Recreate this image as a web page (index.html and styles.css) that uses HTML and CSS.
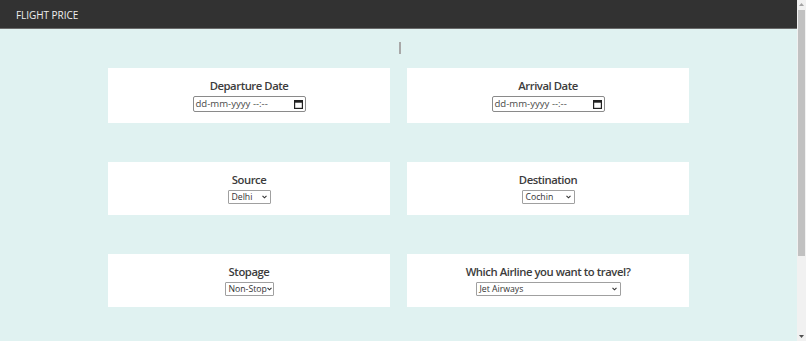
FILE: index.html
```html
<!DOCTYPE html>
<html lang="en">
<head>
<meta charset="utf-8">
<title>Flight Price</title>
<link rel="stylesheet" href="styles.css">
</head>
<body>
<div class="window">
  <div class="page">
    <header class="topbar">FLIGHT PRICE</header>
    <main class="main">
      <div class="caret"></div>
      <div class="grid">
        <section class="card">
          <h5 class="title">Departure Date</h5>
          <div class="date-input"><span class="date-text">dd-mm-yyyy --:--</span>
            <svg class="cal" width="9" height="9" viewBox="0 0 9 9"><rect x="0.6" y="0.6" width="7.8" height="7.8" fill="none" stroke="#222" stroke-width="1.2"/><rect x="0.5" y="0.5" width="8" height="2.2" fill="#222"/></svg>
          </div>
        </section>
        <section class="card">
          <h5 class="title">Arrival Date</h5>
          <div class="date-input"><span class="date-text">dd-mm-yyyy --:--</span>
            <svg class="cal" width="9" height="9" viewBox="0 0 9 9"><rect x="0.6" y="0.6" width="7.8" height="7.8" fill="none" stroke="#222" stroke-width="1.2"/><rect x="0.5" y="0.5" width="8" height="2.2" fill="#222"/></svg>
          </div>
        </section>
        <section class="card card-sm">
          <h5 class="title">Source</h5>
          <div class="select sel-source"><span>Delhi</span>
            <svg class="chev" width="5" height="4" viewBox="0 0 5 4"><path d="M0.5 0.8 L2.5 2.8 L4.5 0.8" fill="none" stroke="#333" stroke-width="1.1"/></svg>
          </div>
        </section>
        <section class="card card-sm">
          <h5 class="title">Destination</h5>
          <div class="select sel-dest"><span>Cochin</span>
            <svg class="chev" width="5" height="4" viewBox="0 0 5 4"><path d="M0.5 0.8 L2.5 2.8 L4.5 0.8" fill="none" stroke="#333" stroke-width="1.1"/></svg>
          </div>
        </section>
        <section class="card card-sm">
          <h5 class="title">Stopage</h5>
          <div class="select sel-stop"><span>Non-Stop</span>
            <svg class="chev" width="5" height="4" viewBox="0 0 5 4"><path d="M0.5 0.8 L2.5 2.8 L4.5 0.8" fill="none" stroke="#333" stroke-width="1.1"/></svg>
          </div>
        </section>
        <section class="card card-sm">
          <h5 class="title">Which Airline you want to travel?</h5>
          <div class="select sel-airline"><span>Jet Airways</span>
            <svg class="chev" width="5" height="4" viewBox="0 0 5 4"><path d="M0.5 0.8 L2.5 2.8 L4.5 0.8" fill="none" stroke="#333" stroke-width="1.1"/></svg>
          </div>
        </section>
      </div>
    </main>
  </div>
  <div class="scrollbar">
    <div class="sb-arrow"><svg width="5" height="3" viewBox="0 0 5 3"><path d="M0 3 L2.5 0 L5 3 Z" fill="#a3a3a3"/></svg></div>
    <div class="sb-track"><div class="sb-thumb"></div></div>
    <div class="sb-arrow"><svg width="5" height="3" viewBox="0 0 5 3"><path d="M0 0 L2.5 3 L5 0 Z" fill="#505050"/></svg></div>
  </div>
</div>
</body>
</html>
```
FILE: styles.css
```css
html, body {
  margin: 0;
  padding: 0;
  height: 100%;
  overflow: hidden;
}
body {
  font-family: "Open Sans", "Noto Sans", sans-serif;
  color: #333;
  background: #e0f2f1;
}
.window {
  display: flex;
  height: 341px;
}
.page {
  flex: 1;
  background: #e0f2f1;
}
.topbar {
  height: 28px;
  background: #323232;
  border-bottom: 1px solid #6a6a6a;
  color: #eee;
  font-size: 10px;
  line-height: 30px;
  padding-left: 16px;
  letter-spacing: -0.05px;
}
.main {
  padding-top: 13px;
}
.caret {
  width: 2px;
  height: 12px;
  background: #a8a8a8;
  margin: 0 auto 14px;
  position: relative;
  left: 1px;
}
.grid {
  width: 581px;
  margin: 0 auto;
  display: grid;
  grid-template-columns: 282px 282px;
  column-gap: 17px;
  row-gap: 39px;
}
.card {
  background: #fff;
  display: flex;
  flex-direction: column;
  align-items: center;
  padding: 9px 0 11px;
  height: 35px;
}
.card-sm {
  height: 33px;
}
.title {
  margin: 0;
  font-size: 11.3px;
  font-weight: 600;
  line-height: 18px;
  color: #3c3c3c;
  letter-spacing: -0.45px;
  height: 19px;
  white-space: nowrap;
}
.date-input {
  box-sizing: border-box;
  width: 113px;
  height: 16px;
  border: 1px solid #8a8a8a;
  border-radius: 2px;
  display: flex;
  align-items: center;
  justify-content: space-between;
  padding: 0 2px 0 2px;
  font-size: 9.6px;
  color: #4a4a4a;
  white-space: nowrap;
}
.date-text {
  line-height: 14px;
}
.cal {
  display: block;
}
.select {
  box-sizing: border-box;
  height: 14px;
  border: 1px solid #a0a0a0;
  border-radius: 1px;
  display: flex;
  align-items: center;
  justify-content: space-between;
  padding: 0 3px 0 3px;
  font-size: 8.7px;
  color: #333;
  line-height: 12px;
  white-space: nowrap;
}
.chev {
  display: block;
  flex: none;
}
.sel-source { width: 43px; }
.sel-dest { width: 53px; }
.sel-stop { width: 49px; padding-left: 3px; }
.sel-airline { width: 145px; }
.scrollbar {
  width: 9px;
  background: #f1f1f1;
  display: flex;
  flex-direction: column;
}
.sb-arrow {
  height: 9px;
  display: flex;
  align-items: center;
  justify-content: center;
}
.sb-track {
  flex: 1;
}
.sb-thumb {
  margin: 1px 1px 0;
  height: 246px;
  background: #c1c1c1;
}
```
